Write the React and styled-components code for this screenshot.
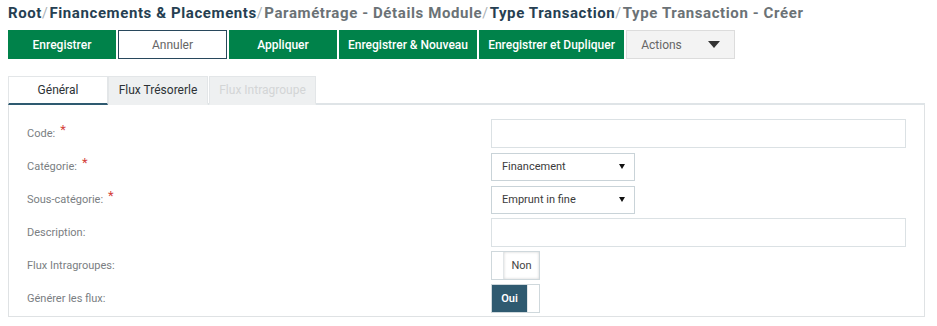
import React from 'react';
import styled, { createGlobalStyle } from 'styled-components';

const Global = createGlobalStyle`
  body {
    margin: 0;
    background: #fff;
    font-family: Roboto, "Liberation Sans", Arial, sans-serif;
  }
`;

const Page = styled.div`
  display: flex;
  flex-direction: column;
  width: 917px;
  padding: 0 12px 0 8px;
`;

const Crumbs = styled.div`
  display: flex;
  align-items: baseline;
  height: 30px;
  padding-top: 4px;
  box-sizing: border-box;
  font-size: 15px;
  font-weight: 700;
  letter-spacing: 0.6px;
  white-space: nowrap;
`;
const Crumb = styled.span`
  color: ${(p) => (p.$strong ? '#263f52' : '#6b7276')};
`;
const Sep = styled.span`
  color: #a9b0b4;
  font-weight: 400;
  font-size: 14px;
  margin: 0 1px 0 0;
`;

const Toolbar = styled.div`
  display: flex;
  gap: 2px;
  height: 29px;
`;
const Button = styled.button`
  display: flex;
  align-items: center;
  justify-content: center;
  gap: 26px;
  width: ${(p) => p.$w}px;
  height: 29px;
  padding: 0;
  box-sizing: border-box;
  font-family: inherit;
  font-size: 12px;
  font-weight: ${(p) => (p.$kind === 'primary' ? 500 : 400)};
  cursor: pointer;
  border: 1px solid
    ${(p) => (p.$kind === 'primary' ? '#00824a' : p.$kind === 'outline' ? '#28485c' : '#dcdcdc')};
  background: ${(p) => (p.$kind === 'primary' ? '#00824a' : p.$kind === 'outline' ? '#fff' : '#f3f3f3')};
  color: ${(p) => (p.$kind === 'primary' ? '#fff' : '#666')};
`;
const Caret = styled.span`
  width: 0;
  height: 0;
  border-left: 6px solid transparent;
  border-right: 6px solid transparent;
  border-top: 7px solid #333;
`;

const Tabs = styled.div`
  display: flex;
  margin-top: 17px;
  width: 917px;
  border-bottom: 2px solid #dfe4e7;
`;
const Tab = styled.div`
  display: flex;
  align-items: center;
  justify-content: center;
  width: ${(p) => p.$w}px;
  height: 29px;
  margin-bottom: -2px;
  margin-right: ${(p) => p.$gap}px;
  box-sizing: border-box;
  font-size: 12px;
  border: 1px solid #e3e6e8;
  border-bottom: 2px solid ${(p) => (p.$active ? '#2e5a70' : 'transparent')};
  background: ${(p) => (p.$active ? '#fff' : '#eef0f1')};
  color: ${(p) => (p.$disabled ? '#d3d5d6' : '#2d3236')};
`;

const Panel = styled.div`
  display: grid;
  grid-template-columns: 464px 1fr;
  row-gap: 4px;
  width: 917px;
  box-sizing: border-box;
  padding: 14px 18px 3px 18px;
  border: 1px solid #dfe2e4;
  border-top: none;
`;
const Label = styled.div`
  display: flex;
  align-items: center;
  height: 29px;
  font-size: 11px;
  color: #7a7e82;
`;
const Star = styled.span`
  color: #d43f3a;
  font-size: 13px;
  margin-left: 5px;
  position: relative;
  top: -4px;
`;
const Field = styled.div`
  display: flex;
  align-items: center;
`;
const TextInput = styled.div`
  width: 100%;
  height: 29px;
  box-sizing: border-box;
  border: 1px solid #dbe1e4;
  background: #fff;
`;
const Select = styled.div`
  display: flex;
  align-items: center;
  justify-content: space-between;
  width: 144px;
  height: 28px;
  box-sizing: border-box;
  padding: 0 9px 0 10px;
  border: 1px solid #c9d3d8;
  font-size: 11px;
  color: #3b3b3b;
`;
const SmallCaret = styled.span`
  width: 0;
  height: 0;
  border-left: 3.5px solid transparent;
  border-right: 3.5px solid transparent;
  border-top: 5px solid #111;
`;
const Toggle = styled.div`
  display: flex;
  flex-direction: ${(p) => (p.$on ? 'row' : 'row-reverse')};
  width: 49px;
  height: 29px;
  box-sizing: border-box;
  border: 1px solid #cfd8dc;
  background: #fff;
`;
const ToggleFace = styled.div`
  display: flex;
  align-items: center;
  justify-content: center;
  flex: 1;
  font-size: 11px;
  font-weight: ${(p) => (p.$on ? 600 : 400)};
  background: ${(p) => (p.$on ? '#2f5a70' : '#fff')};
  color: ${(p) => (p.$on ? '#fff' : '#444')};
  box-shadow: ${(p) => (p.$on ? 'none' : 'inset 0 0 3px rgba(0,0,0,0.18)')};
`;
const Handle = styled.div`
  width: 11px;
  ${(p) => (p.$side === 'left' ? 'border-right' : 'border-left')}: 1px solid #e2e6e8;
`;

const buttons = [
  ['Enregistrer', 'primary', 108],
  ['Annuler', 'outline', 109],
  ['Appliquer', 'primary', 108],
  ['Enregistrer & Nouveau', 'primary', 138],
  ['Enregistrer et Dupliquer', 'primary', 145],
];

export default function App() {
  return (
    <Page>
      <Global />
      <Crumbs>
        <Crumb $strong>Root</Crumb>
        <Sep>/</Sep>
        <Crumb $strong>Financements &amp; Placements</Crumb>
        <Sep>/</Sep>
        <Crumb>Paramétrage - Détails Module</Crumb>
        <Sep>/</Sep>
        <Crumb $strong>Type Transaction</Crumb>
        <Sep>/</Sep>
        <Crumb>Type Transaction - Créer</Crumb>
      </Crumbs>
      <Toolbar>
        {buttons.map(([t, k, w]) => (
          <Button key={t} $kind={k} $w={w}>
            {t}
          </Button>
        ))}
        <Button $kind="ghost" $w={109}>
          Actions
          <Caret />
        </Button>
      </Toolbar>
      <Tabs>
        <Tab $active $w={100} $gap={0}>Général</Tab>
        <Tab $w={100} $gap={1}>Flux Trésorerle</Tab>
        <Tab $disabled $w={107} $gap={0}>Flux Intragroupe</Tab>
      </Tabs>
      <Panel>
        <Label>Code:<Star>*</Star></Label>
        <Field><TextInput /></Field>
        <Label>Catégorie:<Star>*</Star></Label>
        <Field>
          <Select>Financement<SmallCaret /></Select>
        </Field>
        <Label>Sous-catégorie:<Star>*</Star></Label>
        <Field>
          <Select>Emprunt in fine<SmallCaret /></Select>
        </Field>
        <Label>Description:</Label>
        <Field><TextInput /></Field>
        <Label>Flux Intragroupes:</Label>
        <Field>
          <Toggle>
            <ToggleFace>Non</ToggleFace>
            <Handle $side="left" />
          </Toggle>
        </Field>
        <Label>Générer les flux:</Label>
        <Field>
          <Toggle $on>
            <ToggleFace $on>Oui</ToggleFace>
            <Handle $side="right" />
          </Toggle>
        </Field>
      </Panel>
    </Page>
  );
}
